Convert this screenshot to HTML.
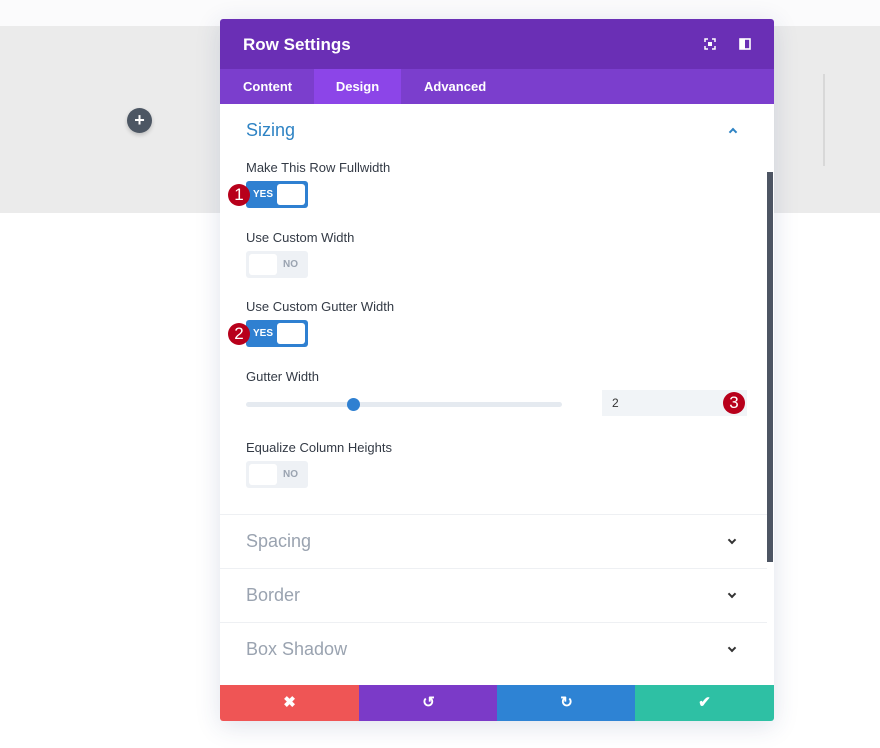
<!DOCTYPE html>
<html><head><meta charset="utf-8"><style>
*{box-sizing:border-box;margin:0;padding:0}
body{width:880px;height:748px;position:relative;background:#fff;font-family:"Liberation Sans",sans-serif;overflow:hidden}
.abs{position:absolute}
.modal{left:220px;top:19px;width:554px;height:702px;background:#fff;box-shadow:0 5px 25px rgba(40,60,120,.15);border-radius:3px;overflow:hidden}
.hdr{left:0;top:0;width:554px;height:50px;background:#6a2fb5;color:#fff;font-size:17px;font-weight:bold;padding:16px 0 0 23px}
.tabs{left:0;top:50px;width:554px;height:35px;background:#7b3ecd;color:#fff;font-size:13px;font-weight:bold}
.tab{position:absolute;top:0;height:35px;line-height:36px}
.lbl{left:26px;font-size:13px;color:#333a45}
.tog{width:62px;height:27px;border-radius:3px}
.on{background:#2f80d1}
.off{background:#eef1f5}
.knob{position:absolute;top:3px;width:28px;height:21px;background:#fff;border-radius:3px}
.tt{position:absolute;top:8px;font-size:10px;font-weight:bold}
.badge{width:22px;height:22px;border-radius:50%;background:#b8001b;color:#fff;font-size:17px;text-align:center;line-height:22px}
.sec{left:26px;font-size:18px;color:#9aa3b0}
.line{left:0;width:547px;height:1px;background:#eef0f3}
.chev{left:509px;width:6px;height:6px;border-right:2px solid #333;border-bottom:2px solid #333;transform:rotate(45deg)}
.btn{position:absolute;top:666px;height:36px;width:139px;color:#fff;text-align:center;line-height:36px;font-size:15px;font-weight:bold}
</style></head><body>
<div class="abs" style="left:0;top:0;width:880px;height:26px;background:#fbfbfc"></div>
<div class="abs" style="left:0;top:26px;width:880px;height:187px;background:#ebebeb"></div>
<div class="abs" style="left:823px;top:74px;width:2px;height:92px;background:#d8d8d8"></div>
<div class="abs" style="left:127px;top:108px;width:25px;height:25px;border-radius:50%;background:#4c5663;color:#fff;text-align:center;line-height:24px;font-size:18px;font-weight:bold;box-shadow:0 2px 4px rgba(0,0,0,.2)">+</div>

<div class="abs modal">
 <div class="abs hdr">Row Settings</div>
 <svg class="abs" style="left:484px;top:19px" width="12" height="12" viewBox="0 0 12 12"><path d="M1 4V1h3M8 1h3v3M11 8v3H8M4 11H1V8" stroke="#fff" stroke-width="1.5" fill="none"/><rect x="4" y="4" width="4" height="4" fill="#fff"/></svg>
 <svg class="abs" style="left:519px;top:19px" width="12" height="12" viewBox="0 0 12 12"><rect x="1" y="1" width="10" height="10" stroke="#fff" stroke-width="1.6" fill="none"/><rect x="1" y="1" width="5" height="10" fill="#fff"/></svg>
 <div class="abs tabs">
  <div class="tab" style="left:23px">Content</div>
  <div class="tab" style="left:94px;width:87px;background:#8c45e8;text-align:center">Design</div>
  <div class="tab" style="left:204px">Advanced</div>
 </div>
 <div class="abs" style="left:26px;top:101px;font-size:18px;color:#2e83c4">Sizing</div>
 <div class="abs" style="left:510px;top:110px;width:6px;height:6px;border-left:2px solid #2e83c4;border-top:2px solid #2e83c4;transform:rotate(45deg)"></div>

 <div class="abs lbl" style="top:141px">Make This Row Fullwidth</div>
 <div class="abs tog on" style="left:26px;top:162px"><span class="tt" style="left:7px;color:#fff">YES</span><div class="knob" style="left:31px"></div></div>
 <div class="abs badge" style="left:8px;top:165px">1</div>

 <div class="abs lbl" style="top:211px">Use Custom Width</div>
 <div class="abs tog off" style="left:26px;top:232px"><div class="knob" style="left:3px"></div><span class="tt" style="left:37px;color:#9aa3b0">NO</span></div>

 <div class="abs lbl" style="top:280px">Use Custom Gutter Width</div>
 <div class="abs tog on" style="left:26px;top:301px"><span class="tt" style="left:7px;color:#fff">YES</span><div class="knob" style="left:31px"></div></div>
 <div class="abs badge" style="left:8px;top:304px">2</div>

 <div class="abs lbl" style="top:350px">Gutter Width</div>
 <div class="abs" style="left:26px;top:383px;width:316px;height:5px;border-radius:3px;background:#e5eaf0"></div>
 <div class="abs" style="left:127px;top:379px;width:13px;height:13px;border-radius:50%;background:#2f80d1"></div>
 <div class="abs" style="left:382px;top:371px;width:145px;height:26px;background:#f1f4f7;font-size:12px;color:#333;padding:6px 0 0 10px">2</div>
 <div class="abs badge" style="left:503px;top:373px">3</div>

 <div class="abs lbl" style="top:421px">Equalize Column Heights</div>
 <div class="abs tog off" style="left:26px;top:442px"><div class="knob" style="left:3px"></div><span class="tt" style="left:37px;color:#9aa3b0">NO</span></div>

 <div class="abs line" style="top:495px"></div>
 <div class="abs sec" style="top:512px">Spacing</div>
 <div class="abs chev" style="top:518px"></div>
 <div class="abs line" style="top:549px"></div>
 <div class="abs sec" style="top:566px">Border</div>
 <div class="abs chev" style="top:572px"></div>
 <div class="abs line" style="top:603px"></div>
 <div class="abs sec" style="top:620px">Box Shadow</div>
 <div class="abs chev" style="top:626px"></div>

 <div class="abs" style="left:547px;top:153px;width:6px;height:390px;background:#4d5563"></div>

 <div class="btn" style="left:0;background:#ef5555">✖</div>
 <div class="btn" style="left:139px;background:#7b3ac8">↺</div>
 <div class="btn" style="left:277px;background:#2e83d4">↻</div>
 <div class="btn" style="left:415px;background:#2ec0a4">✔</div>
</div>
</body></html>
